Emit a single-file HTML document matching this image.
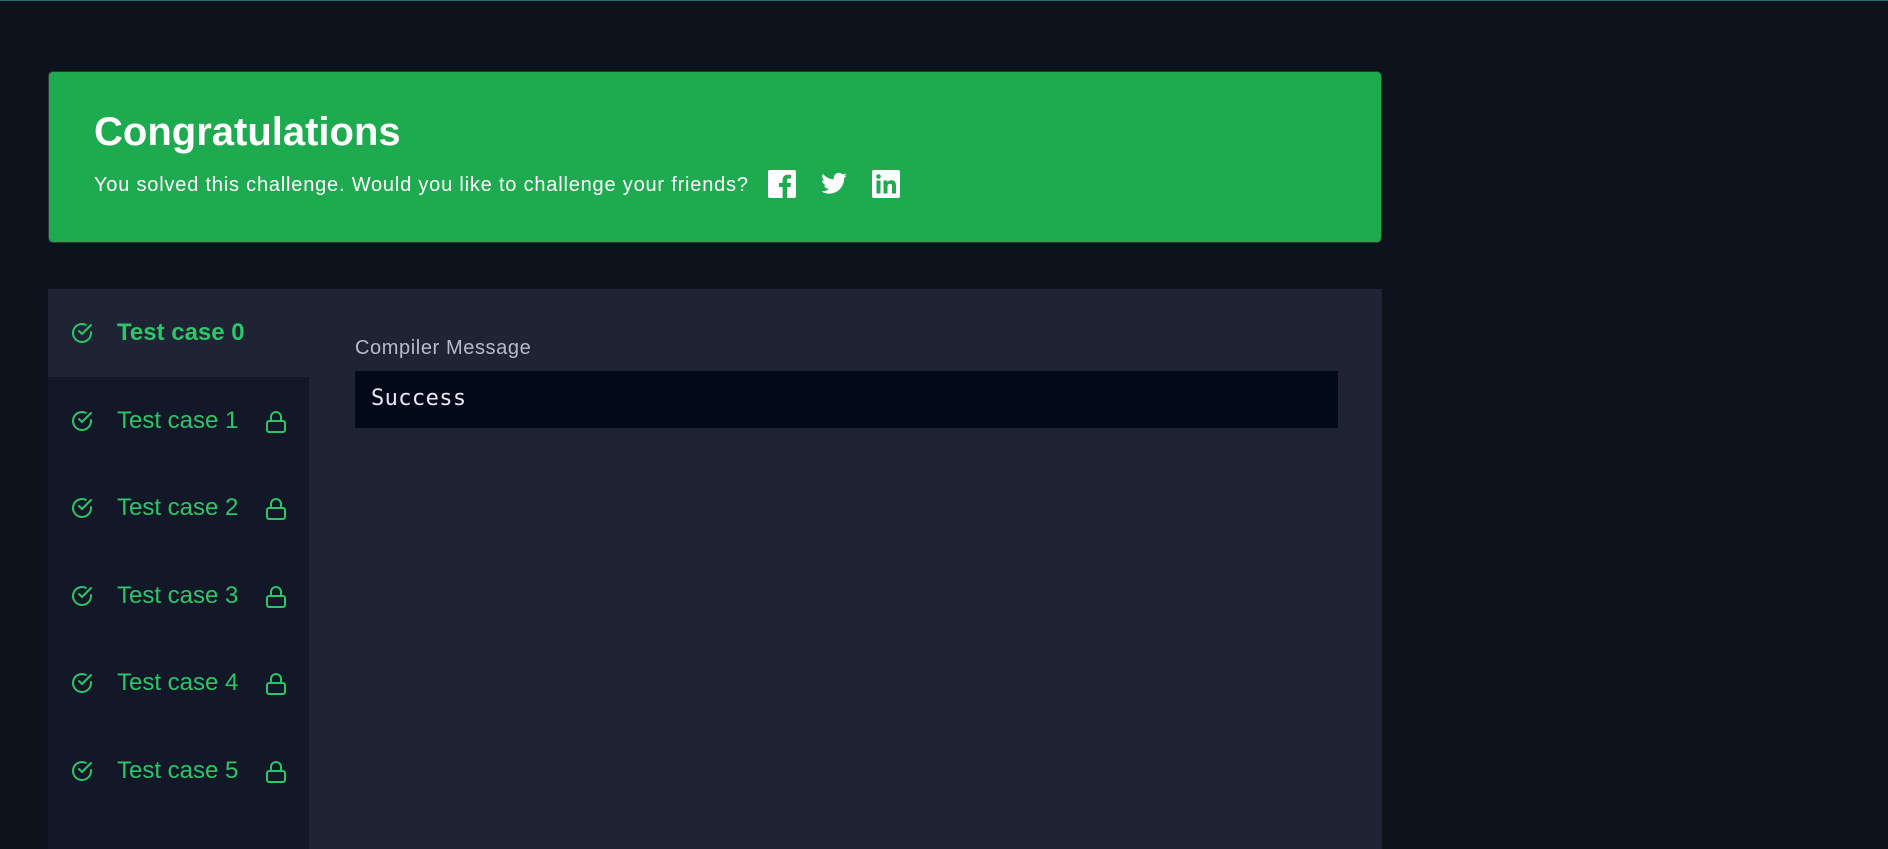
<!DOCTYPE html>
<html><head><meta charset="utf-8"><style>
*{margin:0;padding:0;box-sizing:border-box}
body{width:1888px;height:843px;overflow:hidden;background:#0d131d;font-family:"Liberation Sans",sans-serif;position:relative}
.topline{position:absolute;left:0;top:0;width:1888px;height:1px;background:#2a6b70}
.banner{position:absolute;left:48px;top:71px;width:1334px;height:172px;background:#1eaa4f;border:1px solid #2a3a35;border-radius:5px}
.banner h1{position:absolute;left:45px;top:38px;font-size:40px;font-weight:bold;color:#fff;letter-spacing:0px}
.sub{position:absolute;left:45px;top:97px;height:30px;display:flex;align-items:center;white-space:nowrap}
.sub p{font-size:20px;color:#fff;letter-spacing:0.8px;margin-right:19px;margin-top:3px}
.sub svg{margin-right:24px}
.panel{position:absolute;left:48px;top:289px;width:1334px;height:560px;background:#1e2433}
.side{position:absolute;left:0;top:0;width:261px;height:560px;background:#121828}
.row{position:absolute;left:0;width:261px;height:88px;color:#2cc567;font-size:24px}
.row.active{background:#1e2433;font-weight:bold}
.row .chk{position:absolute;left:22px;top:32px}
.row .t{position:absolute;left:69px;top:30px}
.row .lk{position:absolute;left:217px;top:33px}
.label{position:absolute;left:307px;top:48px;font-size:20px;color:#b4bccb;letter-spacing:0.6px}
.box{position:absolute;left:307px;top:82px;width:983px;height:57px;background:#030b1a}
.box span{position:absolute;left:16px;top:15px;font-family:"DejaVu Sans Mono","Liberation Mono",monospace;font-size:22px;color:#e6ebf3;letter-spacing:0.4px}
</style></head><body>
<div class="topline"></div>
<div class="banner">
<h1>Congratulations</h1>
<div class="sub">
<p>You solved this challenge. Would you like to challenge your friends?</p>
<svg width="28" height="28" viewBox="0 0 28 28"><rect width="28" height="28" rx="2" fill="#fff"/><path d="M19 28V17h3.5l.5-4h-4v-2.5c0-1.2.4-2 2-2H23V5c-.4 0-1.7-.2-3.2-.2-3.1 0-5.2 1.9-5.2 5.4V13H11v4h3.6v11z" fill="#1eaa4f"/></svg>
<svg width="28" height="28" viewBox="0 0 24 24"><path fill="#fff" d="M23 4.6c-.8.4-1.7.6-2.6.7.9-.6 1.6-1.4 2-2.5-.9.5-1.9.9-2.9 1.1A4.5 4.5 0 0 0 11.8 8 12.8 12.8 0 0 1 2.5 3.3a4.5 4.5 0 0 0 1.4 6c-.7 0-1.4-.2-2-.6 0 2.2 1.6 4 3.6 4.4-.7.2-1.4.2-2 .1.6 1.8 2.2 3.1 4.2 3.1A9 9 0 0 1 1 18.2 12.8 12.8 0 0 0 7.9 20.2c8.3 0 12.8-6.9 12.8-12.8v-.6c.9-.6 1.6-1.4 2.3-2.2z"/></svg>
<svg width="28" height="28" viewBox="0 0 28 28"><rect width="28" height="28" rx="2" fill="#fff"/><rect x="4.5" y="10.5" width="4" height="13" fill="#1eaa4f"/><circle cx="6.5" cy="6.5" r="2.3" fill="#1eaa4f"/><path d="M11.5 10.5h3.8v1.8c.6-1.1 2-2.1 4-2.1 4 0 4.7 2.6 4.7 6V23.5h-4v-6.3c0-1.5 0-3.4-2.1-3.4s-2.4 1.6-2.4 3.3v6.4h-4z" fill="#1eaa4f"/></svg>
</div>
</div>
<div class="panel">
<div class="side"></div>
<div class="label">Compiler Message</div>
<div class="box"><span>Success</span></div>
</div>
<div id="rows" style="position:absolute;left:48px;top:289px"></div>
<script>
var h='';var tops=[0,88,175,263,350,438];
for(var i=0;i<6;i++){
h+='<div class="row'+(i==0?' active':'')+'" style="top:'+tops[i]+'px"><svg class="chk" width="24" height="24" viewBox="0 0 24 24" fill="none" stroke="#2cc567" stroke-width="2" stroke-linecap="round" stroke-linejoin="round"><path d="M21 11v1a9 9 0 1 1-5.3-8.2"/><path d="M21 4 12 13l-3-3"/></svg><span class="t">Test case '+i+'</span>'+(i>0?'<svg class="lk" width="22" height="24" viewBox="0 0 22 24" fill="none" stroke="#2cc567" stroke-width="2"><rect x="2" y="11" width="18" height="11" rx="2"/><path d="M6 11V7a5 5 0 0 1 10 0v4"/></svg>':'')+'</div>';}
document.getElementById('rows').innerHTML=h;
</script>
</body></html>
